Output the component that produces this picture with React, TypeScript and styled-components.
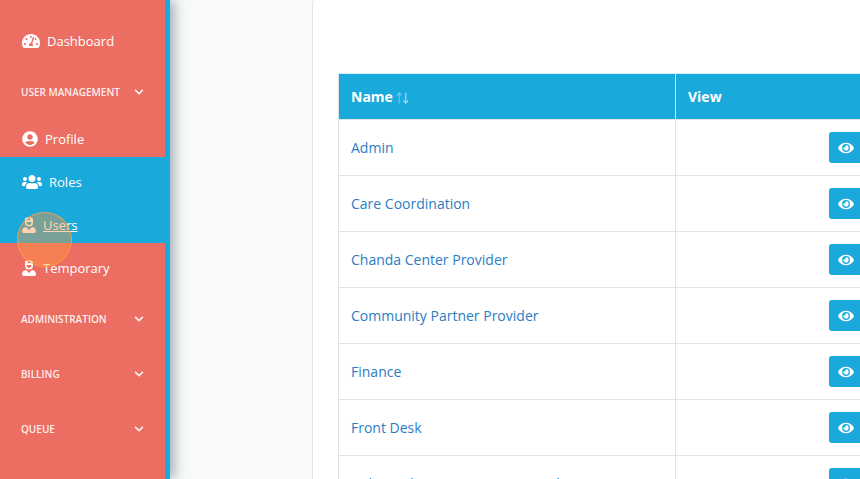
import React from "react";
import styled, { createGlobalStyle } from "styled-components";
import { FaTachometerAlt, FaUserCircle, FaUsers, FaUserNurse, FaEye, FaChevronDown } from "react-icons/fa";

const Global = createGlobalStyle`
  html, body { margin: 0; padding: 0; height: 100%; overflow: hidden; background: #f8faf9; }
  #root { height: 100%; }
  * { box-sizing: border-box; }
`;

const Page = styled.div`
  display: flex;
  width: 860px;
  height: 479px;
  overflow: hidden;
  font-family: "Open Sans", "Liberation Sans", sans-serif;
  background: #f8faf9;
`;

const Sidebar = styled.nav`
  position: relative;
  z-index: 2;
  flex: 0 0 170px;
  height: 479px;
  background: #ec6e63;
  border-right: 5px solid #1aa9db;
  box-shadow: 4px 0 12px rgba(70, 90, 110, 0.5);
  color: #fff;
  overflow: hidden;
`;

const DashboardLink = styled.a`
  display: flex;
  align-items: center;
  gap: 7px;
  height: 64px;
  padding: 18px 0 0 22px;
  font-size: 13px;
  color: #fff;
  svg { width: 18px; height: 16px; }
`;

const SectionHeader = styled.div<{ $open?: boolean }>`
  display: flex;
  align-items: center;
  justify-content: space-between;
  height: ${(p) => (p.$open ? "50px" : "55px")};
  padding: ${(p) => (p.$open ? "6px" : "0")} 21px 0 21px;
  font-size: 10px;
  font-weight: 600;
  color: rgba(255, 255, 255, 0.9);
  text-transform: uppercase;
  svg { width: 10px; height: 10px; }
`;

const SubList = styled.div`
  margin-bottom: 5px;
`;

const ActiveBlock = styled.div`
  background: #1aa9db;
`;

const SubItem = styled.a<{ $link?: boolean }>`
  display: flex;
  align-items: center;
  gap: 7px;
  height: 43px;
  padding: 7px 0 0 22px;
  font-size: 13px;
  color: #fff;
  text-decoration: ${(p) => (p.$link ? "underline" : "none")};
`;

const NurseIcon = styled(FaUserNurse)`
  width: 14px;
  height: 16px;
`;

const ClickRing = styled.div`
  position: absolute;
  left: 17px;
  top: 212px;
  width: 55px;
  height: 55px;
  border-radius: 50%;
  background: rgba(255, 150, 60, 0.42);
  border: 1.5px solid rgba(255, 160, 70, 0.75);
`;

const Main = styled.main`
  flex: 1;
  min-width: 0;
  padding-left: 142px;
`;

const Card = styled.section`
  width: 700px;
  height: 600px;
  margin-top: -1px;
  padding: 73px 0 0 25px;
  background: #fff;
  border: 1px solid #e2e4e5;
  border-radius: 4px;
`;

const Table = styled.table`
  border-collapse: collapse;
  table-layout: fixed;
  width: 545px;
  font-size: 14px;
`;

const HeadCell = styled.th`
  height: 46px;
  padding: 0 12px;
  background: #1aa9db;
  border: 1px solid #e0e3e6;
  border-top-color: #d5eff8;
  border-bottom: none;
  color: #fff;
  font-weight: 700;
  font-size: 14px;
  text-align: left;
`;

const SortArrows = styled.svg`
  width: 15px;
  height: 14px;
  margin-left: 2px;
  vertical-align: -3px;
`;

const Cell = styled.td`
  height: 56px;
  padding: 0 12px;
  border: 1px solid #e0e3e6;
  color: #2c7cc4;
`;

const ActionCell = styled(Cell)`
  text-align: right;
  padding-right: 13px;
`;

const ViewButton = styled.button`
  display: inline-flex;
  align-items: center;
  justify-content: center;
  width: 40px;
  height: 31px;
  padding: 0 6px 0 0;
  border: none;
  border-radius: 3px;
  background: #1aa9db;
  color: #fff;
  vertical-align: middle;
  svg { width: 16px; height: 14px; }
`;

const roles = [
  "Admin",
  "Care Coordination",
  "Chanda Center Provider",
  "Community Partner Provider",
  "Finance",
  "Front Desk",
  "Independent Community Provider",
];

const sections = ["Administration", "Billing", "Queue", "Reports"];

export default function App() {
  return (
    <Page>
      <Global />
      <Sidebar>
        <DashboardLink><FaTachometerAlt />Dashboard</DashboardLink>
        <SectionHeader $open>User Management<FaChevronDown /></SectionHeader>
        <SubList>
          <SubItem><FaUserCircle size={16} />Profile</SubItem>
          <ActiveBlock>
            <SubItem><FaUsers size={20} />Roles</SubItem>
            <SubItem $link><NurseIcon />Users</SubItem>
          </ActiveBlock>
          <SubItem><NurseIcon />Temporary</SubItem>
        </SubList>
        {sections.map((s) => (
          <SectionHeader key={s}>{s}<FaChevronDown /></SectionHeader>
        ))}
        <ClickRing />
      </Sidebar>
      <Main>
        <Card>
          <Table>
            <colgroup>
              <col style={{ width: 337 }} />
              <col />
            </colgroup>
            <thead>
              <tr>
                <HeadCell>
                  Name
                  <SortArrows viewBox="0 0 16 14" fill="none" strokeWidth="1.2">
                    <path d="M4.5 13V2M2 4.5 4.5 1.5 7 4.5" stroke="#6cc8e8" />
                    <path d="M11.5 1v11M9 9.5l2.5 3 2.5-3" stroke="#a8e0f3" />
                  </SortArrows>
                </HeadCell>
                <HeadCell>View</HeadCell>
              </tr>
            </thead>
            <tbody>
              {roles.map((r) => (
                <tr key={r}>
                  <Cell>{r}</Cell>
                  <ActionCell><ViewButton><FaEye /></ViewButton></ActionCell>
                </tr>
              ))}
            </tbody>
          </Table>
        </Card>
      </Main>
    </Page>
  );
}
